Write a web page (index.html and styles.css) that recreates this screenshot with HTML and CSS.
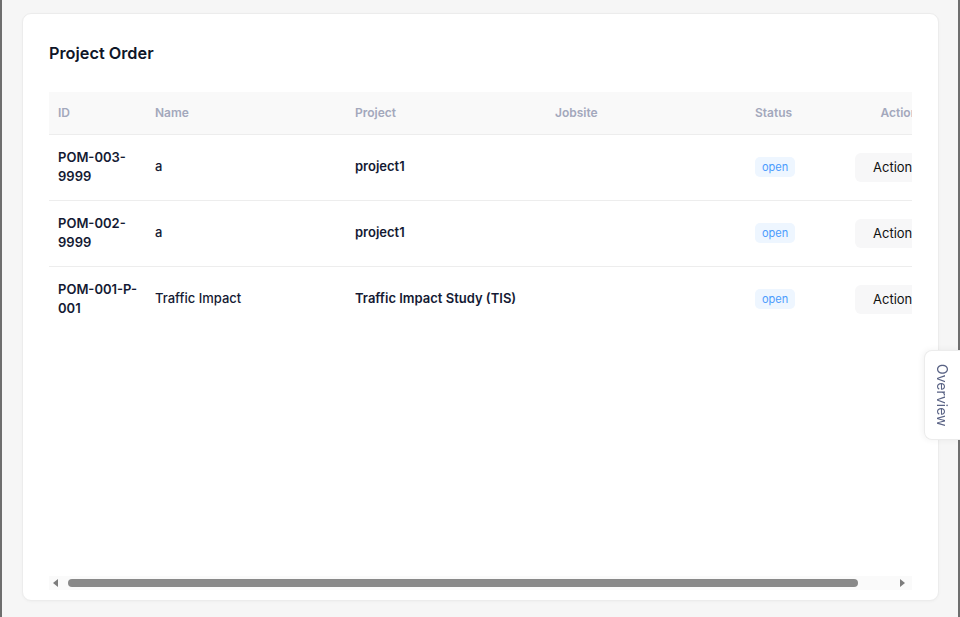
FILE: index.html
```html
<!DOCTYPE html>
<html>
<head>
<meta charset="utf-8">
<link rel="stylesheet" href="styles.css">
</head>
<body>
<div class="page">
  <div class="card">
    <h2 class="title">Project Order</h2>
    <div class="scroller">
      <div class="table-wrap">
        <table class="tbl">
          <colgroup>
            <col class="c-id"><col class="c-name"><col class="c-proj"><col class="c-job"><col class="c-status"><col class="c-act">
          </colgroup>
          <thead>
            <tr><th>ID</th><th>Name</th><th>Project</th><th>Jobsite</th><th>Status</th><th class="th-act">Actions</th></tr>
          </thead>
          <tbody>
            <tr>
              <td class="id">POM-003-9999</td><td class="name">a</td><td class="proj">project1</td><td></td>
              <td><span class="badge">open</span></td><td><button class="btn">Actions</button></td>
            </tr>
            <tr>
              <td class="id">POM-002-9999</td><td class="name">a</td><td class="proj">project1</td><td></td>
              <td><span class="badge">open</span></td><td><button class="btn">Actions</button></td>
            </tr>
            <tr>
              <td class="id">POM-001-P-001</td><td class="name">Traffic Impact</td><td class="proj">Traffic Impact Study (TIS)</td><td></td>
              <td><span class="badge">open</span></td><td><button class="btn">Actions</button></td>
            </tr>
          </tbody>
        </table>
      </div>
      <div class="hscroll">
        <span class="arrow arrow-left"></span>
        <span class="thumb"></span>
        <span class="arrow arrow-right"></span>
      </div>
    </div>
  </div>
</div>
<div class="overview-tab"><span>Overview</span></div>
</body>
</html>
```
FILE: styles.css
```css
* { box-sizing: border-box; }
html, body { margin: 0; padding: 0; }
body {
  width: 960px;
  height: 617px;
  background: #f6f6f6;
  border-left: 2px solid #6e6e6e;
  border-right: 2px solid #6e6e6e;
  font-family: Inter, "Noto Sans", sans-serif;
  overflow: hidden;
}
.page {
  padding: 13px 18px 0 20px;
}
.card {
  width: 917px;
  height: 588px;
  background: #fff;
  border: 1px solid #ececec;
  border-radius: 9px;
  box-shadow: 0 1px 3px rgba(0,0,0,0.03);
  padding: 27px 26px 10px 26px;
  display: flex;
  flex-direction: column;
}
.title {
  margin: 0 0 27px 0;
  font-size: 16.3px;
  line-height: 24px;
  font-weight: 600;
  color: #0f1628;
}
.scroller {
  flex: 1;
  display: flex;
  flex-direction: column;
}
.table-wrap {
  flex: 1;
  overflow: hidden;
}
.tbl {
  width: 910px;
  table-layout: fixed;
  border-collapse: collapse;
}
.c-id { width: 97px; }
.c-name { width: 200px; }
.c-proj { width: 200px; }
.c-job { width: 200px; }
.c-status { width: 100px; }
.c-act { width: 113px; }
.tbl th {
  background: #f9f9f9;
  height: 42px;
  padding: 0 9px;
  text-align: left;
  font-size: 12px;
  font-weight: 600;
  color: #a3a8bc;
  border-bottom: 1px solid #ededed;
}
.tbl th.th-act { text-align: center; }
.tbl td {
  padding: 13px 9px 14px 9px;
  font-size: 13px;
  line-height: 19px;
  color: #141a33;
  border-bottom: 1px solid #ededed;
  vertical-align: middle;
}
.tbl tbody tr:last-child td { border-bottom: none; }
.tbl td.id { font-weight: 600; padding-right: 1px; }
.tbl td.name { font-weight: 500; }
.tbl td.proj { font-weight: 600; }
.badge {
  display: inline-block;
  font-size: 11px;
  line-height: 20px;
  padding: 0 7px;
  border-radius: 5px;
  background: #eef6ff;
  color: #4b9bfd;
}
.btn {
  font-family: Inter, "Noto Sans", sans-serif;
  font-size: 13px;
  line-height: 29px;
  height: 29px;
  padding: 0 18px;
  margin-top: 1px;
  border: none;
  border-radius: 6px;
  background: #f7f7f8;
  color: #111;
  white-space: nowrap;
}
.hscroll {
  height: 14px;
  background: #fafafa;
  display: flex;
  align-items: center;
  padding: 0 7px 0 4px;
}
.arrow {
  width: 0;
  height: 0;
  border-top: 4.5px solid transparent;
  border-bottom: 4.5px solid transparent;
}
.arrow-left {
  border-right: 5px solid #7c7c7c;
}
.arrow-right {
  border-left: 5px solid #7c7c7c;
  margin-left: auto;
}
.thumb {
  width: 790px;
  height: 8px;
  margin-left: 10px;
  border-radius: 4px;
  background: #898989;
}
.overview-tab {
  position: fixed;
  right: 0;
  top: 350px;
  width: 36px;
  height: 90px;
  background: #fff;
  border: 1px solid #ececec;
  border-right: none;
  border-radius: 8px 0 0 8px;
  box-shadow: -1px 0 6px rgba(0,0,0,0.06);
  display: flex;
  align-items: center;
  justify-content: center;
}
.overview-tab span {
  writing-mode: vertical-rl;
  font-size: 14px;
  color: #5a6385;
}
```
